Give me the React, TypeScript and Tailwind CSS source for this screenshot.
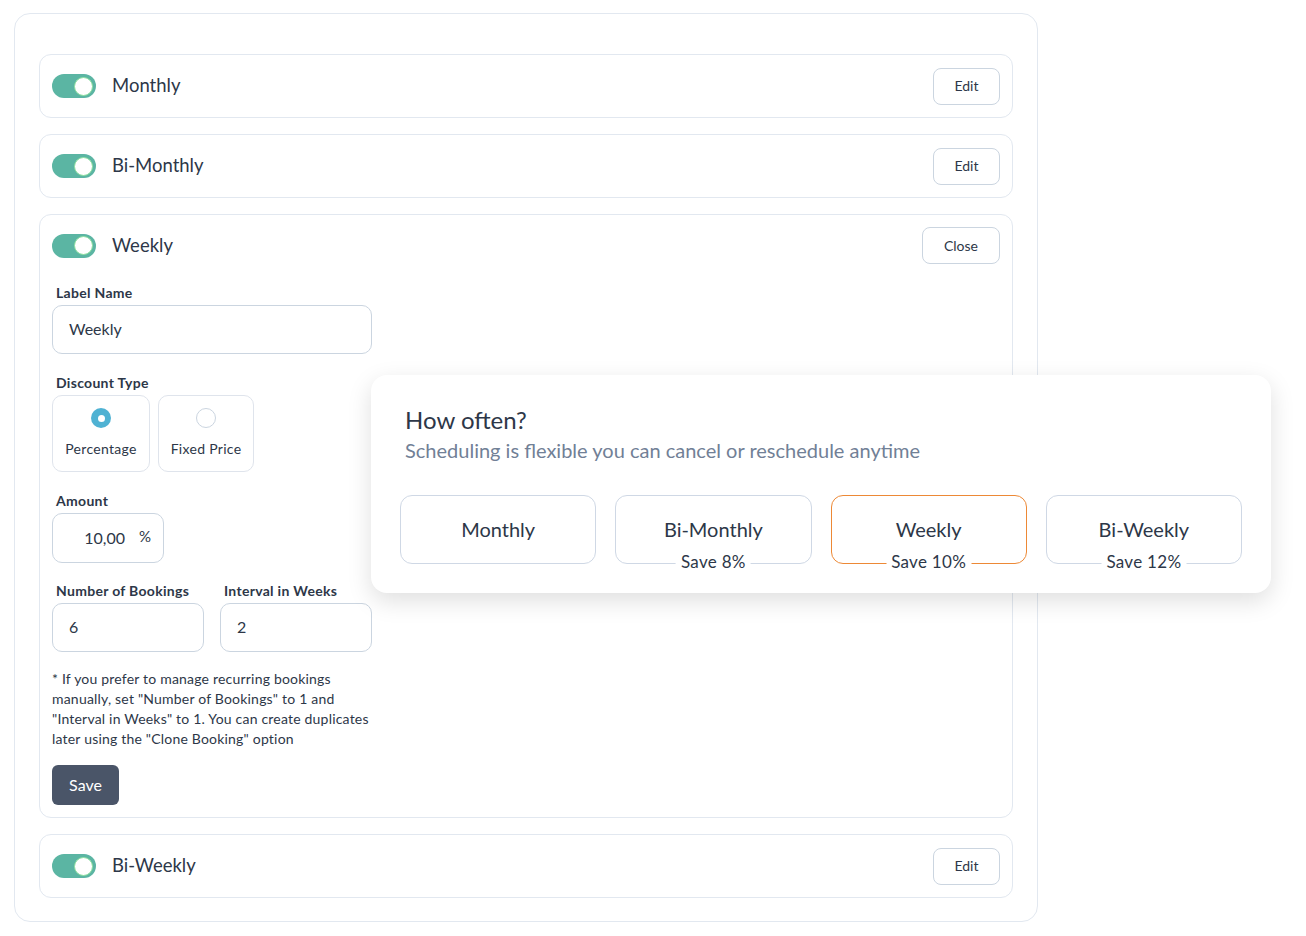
const font = { fontFamily: "Lato, 'Noto Sans', sans-serif" };

const Toggle = () => (
  <div className="flex h-6 w-11 shrink-0 items-center justify-end rounded-full bg-[#5bb5a3] px-[3px]">
    <div className="h-[19px] w-[19px] rounded-full border border-[#8ee0a0] bg-white" />
  </div>
);

const CollapsedRow = ({ label }: { label: string }) => (
  <div className="flex h-16 items-center justify-between rounded-xl border border-[#e2e8f0] bg-white pl-3 pr-3">
    <div className="flex items-center gap-4">
      <Toggle />
      <span className="text-[18.5px] text-[#2d3748]">{label}</span>
    </div>
    <button className="h-[37px] w-[67px] rounded-lg border border-[#cbd5e0] text-sm text-[#2d3748]">Edit</button>
  </div>
);

const Label = ({ children }: { children: React.ReactNode }) => (
  <div className="mb-[3px] pl-1 text-[14px] font-bold leading-[18px] tracking-[0.3px] text-[#2d3748]">{children}</div>
);

const Field = ({ value, className }: { value: string; className: string }) => (
  <div className={`flex h-[49px] items-center rounded-[10px] border border-[#cbd5e0] px-4 pb-[2px] text-[16px] text-[#2d3748] ${className}`}>
    {value}
  </div>
);

const Radio = ({ label, selected }: { label: string; selected?: boolean }) => (
  <div className="flex h-[77px] flex-col items-center justify-center gap-[10px] rounded-[10px] border border-[#dfe4ec]">
    {selected ? (
      <div className="flex h-[20px] w-[20px] items-center justify-center rounded-full bg-[#4fb2d3]">
        <div className="h-[7px] w-[7px] rounded-full bg-white" />
      </div>
    ) : (
      <div className="h-[20px] w-[20px] rounded-full border border-[#cbd5e0]" />
    )}
    <span className="text-[14px] tracking-[0.3px] text-[#2d3748]">{label}</span>
  </div>
);

const Option = ({ title, save, active }: { title: string; save?: string; active?: boolean }) => (
  <div
    className={`relative flex h-[69px] items-center justify-center rounded-xl border bg-white text-[20px] text-[#2d3748] ${
      active ? "border-[#ed8936]" : "border-[#cfd8e5]"
    }`}
  >
    <span className="-mt-[2px]">{title}</span>
    {save && (
      <span className="absolute -bottom-[10px] left-1/2 -translate-x-1/2 whitespace-nowrap bg-white px-[5px] text-[17px] leading-[22px] tracking-[0.3px]">
        {save}
      </span>
    )}
  </div>
);

export default function App() {
  return (
    <div className="relative h-[936px] w-[1306px] bg-white" style={font}>
      <div className="pl-[14px] pt-[13px]">
        <div className="flex w-[1024px] flex-col gap-4 rounded-2xl border border-[#e2e8f0] px-6 pb-[23px] pt-10">
          <CollapsedRow label="Monthly" />
          <CollapsedRow label="Bi-Monthly" />

          <div className="rounded-xl border border-[#e2e8f0] bg-white px-3 pb-3 pt-3">
            <div className="flex items-center justify-between">
              <div className="flex items-center gap-4">
                <Toggle />
                <span className="text-[18.5px] text-[#2d3748]">Weekly</span>
              </div>
              <button className="h-[37px] w-[78px] rounded-lg border border-[#cbd5e0] text-sm text-[#2d3748]">Close</button>
            </div>

            <div className="mt-[20px]">
              <Label>Label Name</Label>
              <Field value="Weekly" className="w-[320px]" />
            </div>

            <div className="mt-[20px]">
              <Label>Discount Type</Label>
              <div className="flex gap-2">
                <div className="w-[98px]">
                  <Radio label="Percentage" selected />
                </div>
                <div className="w-[96px]">
                  <Radio label="Fixed Price" />
                </div>
              </div>
            </div>

            <div className="mt-[20px]">
              <Label>Amount</Label>
              <div className="flex h-[50px] w-[112px] items-center justify-end gap-[14px] rounded-[10px] border border-[#cbd5e0] pr-3 text-[16px] text-[#2d3748]">
                <span>10,00</span>
                <span className="-mt-1 text-[15px]">%</span>
              </div>
            </div>

            <div className="mt-[19px] flex gap-4">
              <div>
                <Label>Number of Bookings</Label>
                <Field value="6" className="w-[152px]" />
              </div>
              <div>
                <Label>Interval in Weeks</Label>
                <Field value="2" className="w-[152px]" />
              </div>
            </div>

            <p className="mt-[17px] whitespace-nowrap text-[14px] leading-5 tracking-[0.2px] text-[#2d3748]">
              * If you prefer to manage recurring bookings
              <br />
              manually, set "Number of Bookings" to 1 and
              <br />
              "Interval in Weeks" to 1. You can create duplicates
              <br />
              later using the "Clone Booking" option
            </p>

            <button className="mt-[16px] h-10 w-[67px] rounded-md bg-[#4a5568] text-[16px] text-white">Save</button>
          </div>

          <CollapsedRow label="Bi-Weekly" />
        </div>
      </div>

      <div className="absolute left-[371px] top-[375px] w-[900px] rounded-2xl bg-white px-[29px] pb-[29px] pt-[29px] shadow-[0_8px_24px_rgba(0,0,0,0.13)]">
        <h2 className="pl-[5px] text-[24px] leading-8 text-[#2d3748]">How often?</h2>
        <p className="pl-[5px] text-[20px] leading-7 text-[#718096]">Scheduling is flexible you can cancel or reschedule anytime</p>
        <div className="mt-[31px] grid grid-cols-4 gap-[19px]">
          <Option title="Monthly" />
          <Option title="Bi-Monthly" save="Save 8%" />
          <Option title="Weekly" save="Save 10%" active />
          <Option title="Bi-Weekly" save="Save 12%" />
        </div>
      </div>
    </div>
  );
}
